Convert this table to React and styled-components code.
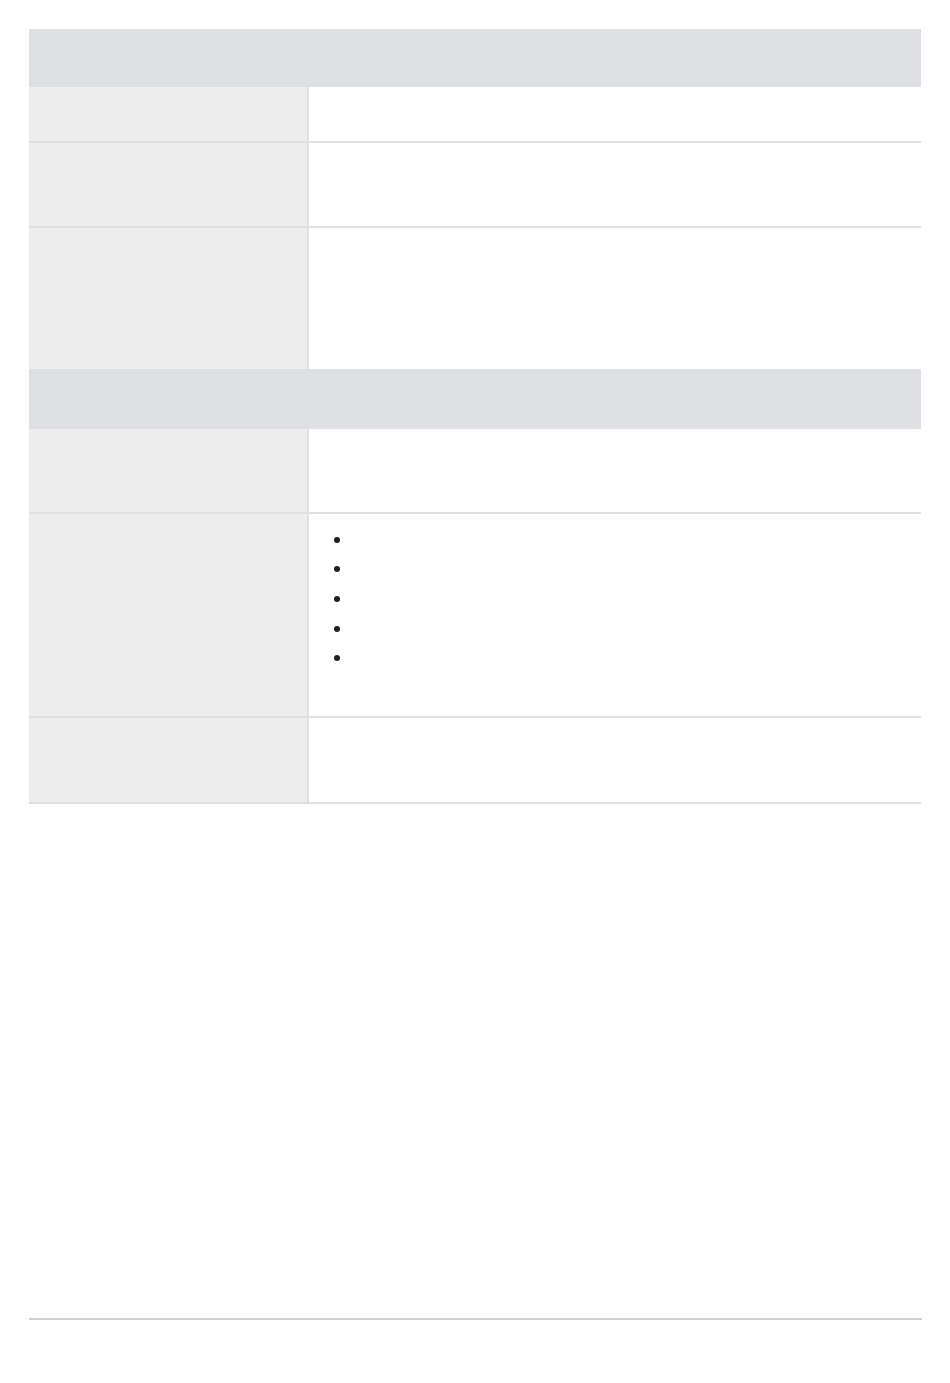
import React from 'react';
import styled, {createGlobalStyle} from 'styled-components';


const GlobalStyle = createGlobalStyle `
  body{
    margin: 0;
    background: #fff;
    font-family: "Liberation Sans", Arial, sans-serif;
  }
`

const Page = styled.div `
  width: 892px;
  padding: 29px 0 0 29px;
`

const Table = styled.div `
  display: flex;
  flex-direction: column;
`

const SectionHeader = styled.div `
  height: 58px;
  background: #dee0e4;
`

const Row = styled.div `
  display: flex;
  height: ${props => props.height}px;
  border-bottom: 2px solid #dee0e4;
`

const Label = styled.div `
  width: 278px;
  flex-shrink: 0;
  background: #ededed;
  border-right: 2px solid #dee0e4;
`

const Value = styled.div `
  flex: 1;
  background: #fff;
`

const Bullets = styled.ul `
  list-style: none;
  margin: 0;
  padding: 11px 0 0 25px;
`

const Bullet = styled.li `
  height: 29.6px;
  display: flex;
  align-items: center;
  &::before{
    content: '';
    width: 6px;
    height: 6px;
    border-radius: 50%;
    background: #1f1f1f;
  }
`

const Footer = styled.div `
  margin-top: 514px;
  width: 893px;
  height: 2px;
  background: #d0d0d0;
`

const sections = [
  [54, 83, 141],
  [83, {height: 202, bullets: 5}, 84]
];

const App = () => {
  return (
    <Page>
      <GlobalStyle/>
      <Table>
        {sections.map((rows, s) => (
          <React.Fragment key={s}>
            <SectionHeader/>
            {rows.map((row, r) => {
              const height = typeof row === 'number' ? row : row.height;
              return (
                <Row key={r} height={height}>
                  <Label/>
                  <Value>
                    {row.bullets && (
                      <Bullets>
                        {Array.from({length: row.bullets}).map((_, i) => <Bullet key={i}/>)}
                      </Bullets>
                    )}
                  </Value>
                </Row>
              );
            })}
          </React.Fragment>
        ))}
      </Table>
      <Footer/>
    </Page>
  )
}

export default App;
